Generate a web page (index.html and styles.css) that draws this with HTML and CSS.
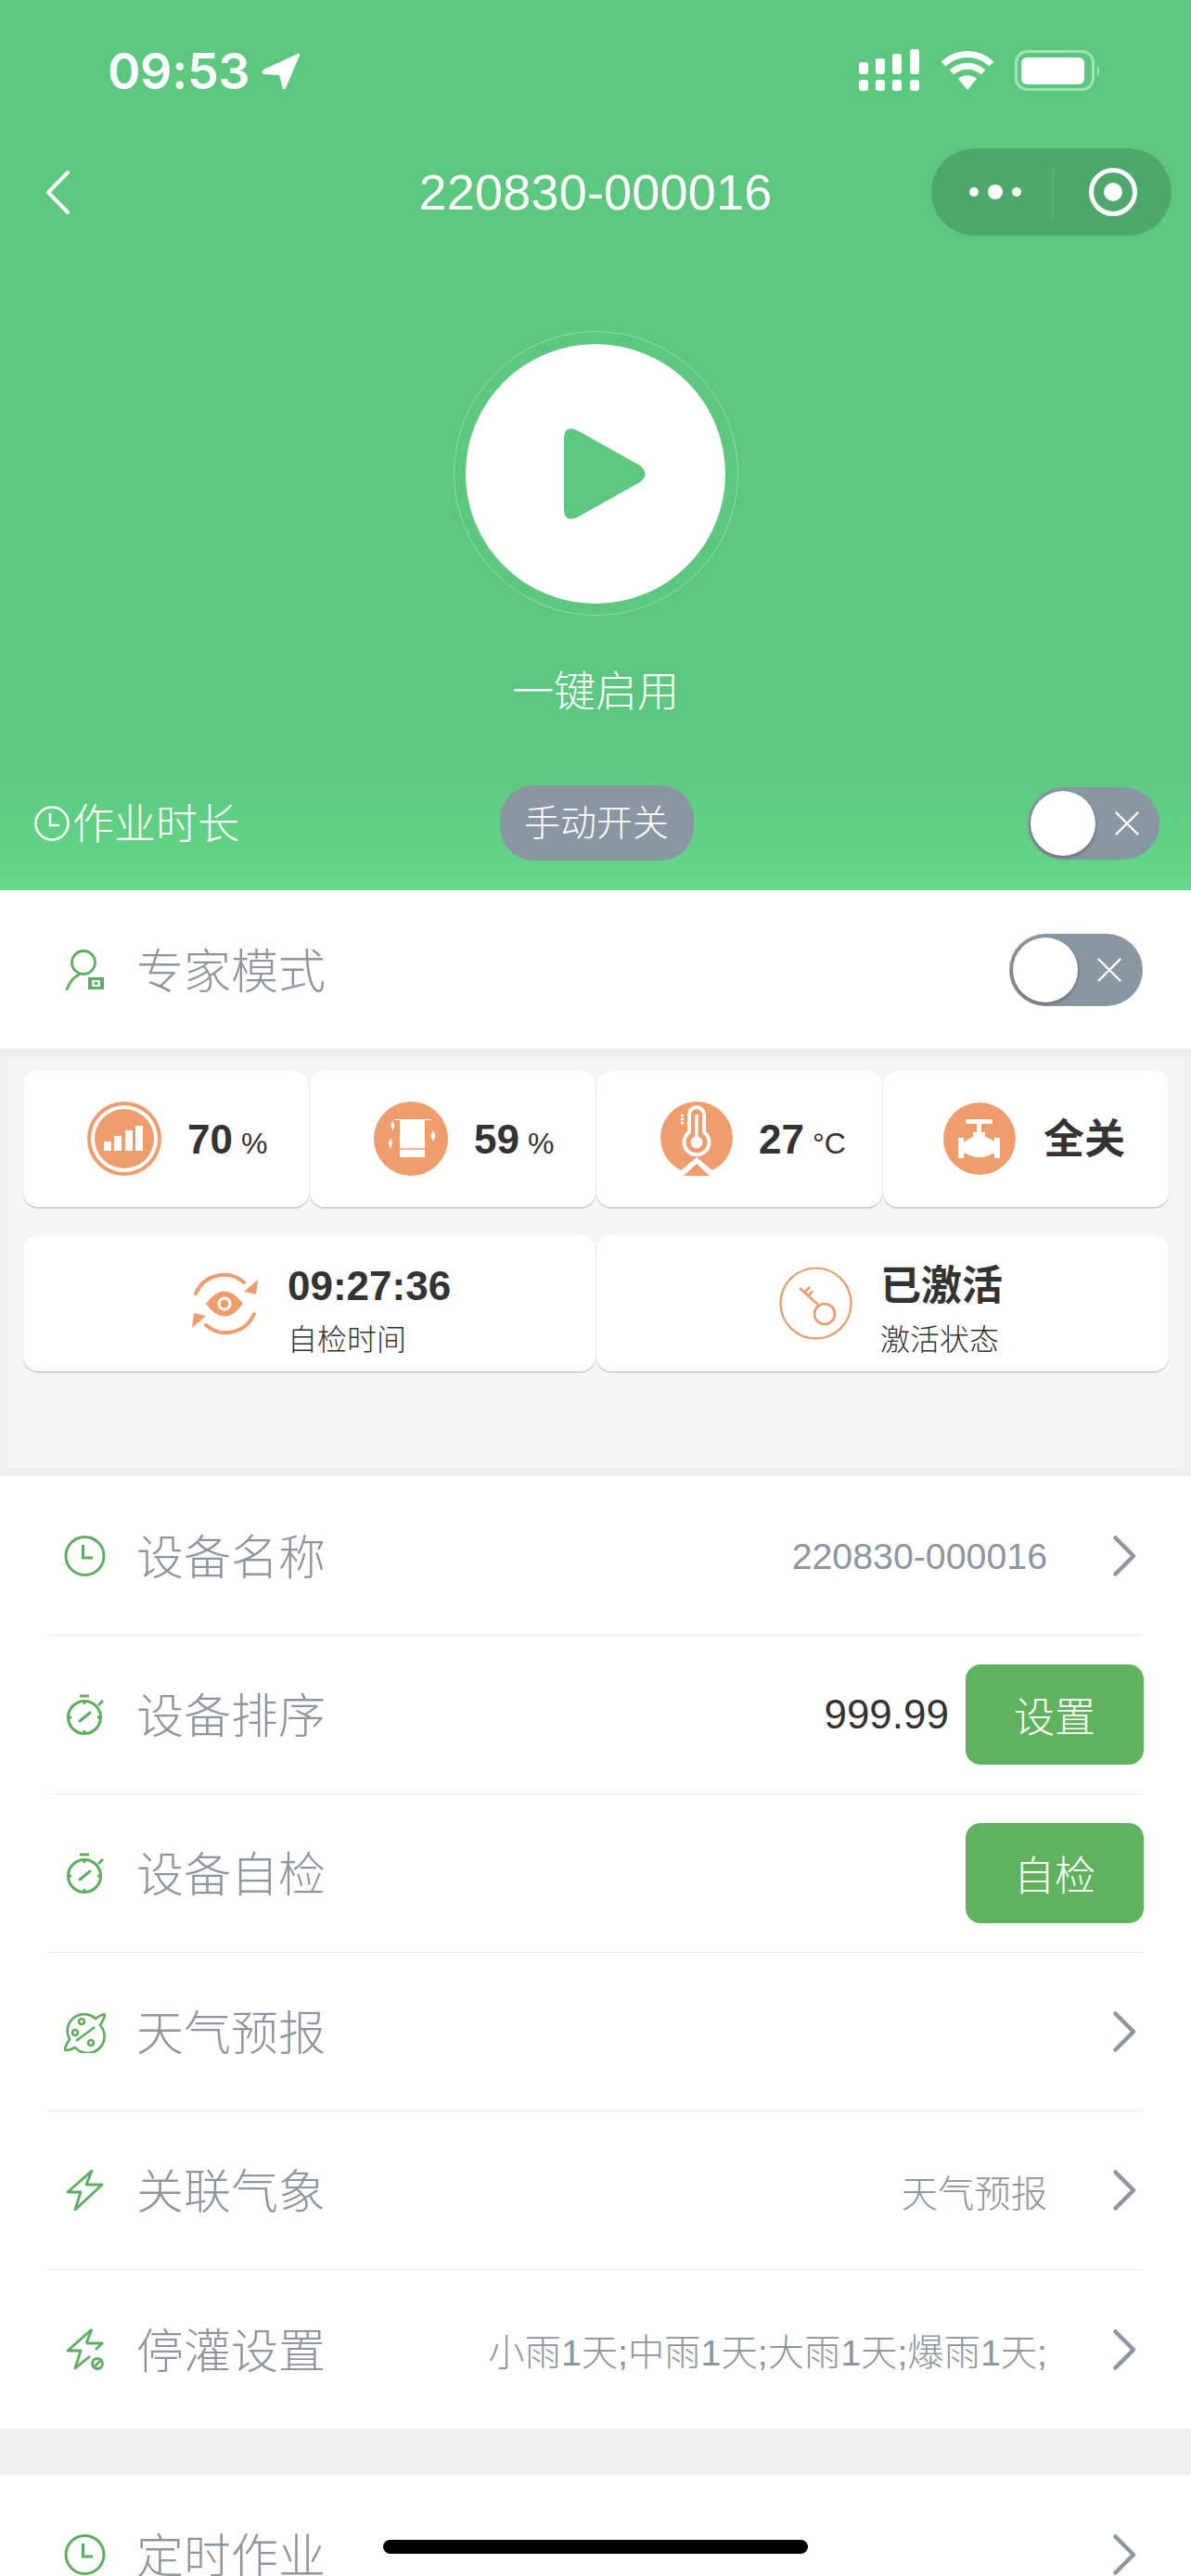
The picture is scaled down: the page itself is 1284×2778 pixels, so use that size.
FILE: index.html
```html
<!DOCTYPE html>
<html lang="zh-CN">
<head>
<meta charset="utf-8">
<title>220830-000016</title>
<link rel="stylesheet" href="styles.css">
</head>
<body>
<div class="page">
  <header class="hero">
    <div class="status">
      <div class="status-left">
        <span class="time">09:53</span>
        <svg class="loc" width="41" height="40" viewBox="0 0 41 40"><path d="M39 1 L2 18 Q-1 21 2 23 L19 24 L23 39 Q24 40 26 38 L41 3 Q41 0 39 1Z" fill="#fff"/></svg>
      </div>
      <div class="status-right">
        <svg width="66" height="45" viewBox="0 0 66 45"><g fill="#fff"><rect x="0" y="14" width="10" height="13" rx="3"/><rect x="18" y="10" width="10" height="17" rx="3"/><rect x="36" y="5" width="10" height="22" rx="3"/><rect x="55" y="0" width="10" height="27" rx="3"/><rect x="0" y="33" width="10" height="12" rx="3"/><rect x="18" y="33" width="10" height="12" rx="3"/><rect x="36" y="33" width="10" height="12" rx="3"/><rect x="55" y="33" width="10" height="12" rx="3"/></g></svg>
        <svg width="58" height="43" viewBox="0 0 58 43"><g fill="none" stroke="#fff" stroke-width="7"><path d="M3 15 C18 1 40 1 55 15"/><path d="M12 24 C22 15 36 15 46 24"/></g><path d="M19 31 C25 26 33 26 39 31 L29 43Z" fill="#fff"/></svg>
        <svg class="batt" width="94" height="44" viewBox="0 0 94 44"><rect x="1.5" y="1.5" width="83" height="41" rx="12" fill="none" stroke="#a5e3b9" stroke-width="3"/><rect x="7" y="8" width="68" height="29" rx="6" fill="#fff"/><path d="M89 16 Q93 22 89 28Z" fill="#a5e3b9"/></svg>
      </div>
    </div>
    <nav class="nav">
      <svg class="back" width="26" height="47" viewBox="0 0 26 47"><path d="M24 2 L3 23.5 L24 45" fill="none" stroke="#fff" stroke-width="4" stroke-linecap="round" stroke-linejoin="round"/></svg>
      <h1 class="title">220830-000016</h1>
      <div class="capsule">
        <svg width="56" height="18" viewBox="0 0 56 18"><g fill="#fff"><circle cx="5" cy="9" r="5"/><circle cx="28" cy="9" r="8"/><circle cx="51" cy="9" r="5"/></g></svg>
        <span class="capsule-line"></span>
        <svg width="54" height="54" viewBox="0 0 54 54"><circle cx="27" cy="27" r="23.5" fill="none" stroke="#fff" stroke-width="5"/><circle cx="27" cy="27" r="10" fill="#fff"/></svg>
      </div>
    </nav>
    <div class="ring">
      <div class="play">
        <svg width="92" height="102" viewBox="0 0 92 102"><path d="M2 13 Q2 -2 16 4 L84 42 Q95 51 84 60 L16 98 Q2 104 2 89Z" fill="#5cc77f"/></svg>
      </div>
    </div>
    <div class="enable">一键启用</div>
    <div class="work">
      <div class="work-left">
        <svg width="40" height="38" viewBox="0 0 40 38"><circle cx="20" cy="19" r="17.5" fill="none" stroke="#fff" stroke-width="2.5"/><path d="M18 8 V21 H28" fill="none" stroke="#fff" stroke-width="2.5"/></svg>
        <span class="work-text">作业时长</span>
      </div>
      <div class="pill">手动开关</div>
      <div class="toggle toggle-end">
        <span class="thumb"></span>
        <svg class="cross" width="26" height="26" viewBox="0 0 26 26"><path d="M1.5 1.5 L24.5 24.5 M24.5 1.5 L1.5 24.5" stroke="#fff" stroke-width="2.4" stroke-linecap="round"/></svg>
      </div>
    </div>
  </header>

  <section class="expert">
    <svg class="row-icon" width="41" height="44" viewBox="0 0 41 44"><circle cx="19" cy="14" r="12.500" fill="none" stroke="#5cae5e" stroke-width="2.800"/><path d="M14 27 C8 30 4 35 1 43" fill="none" stroke="#5cae5e" stroke-width="2.800" stroke-linecap="round"/><rect x="24" y="30" width="17" height="13" fill="#5cae5e"/><rect x="28" y="33" width="9" height="7" fill="#fff"/><rect x="30.500" y="35" width="4" height="3" fill="#5cae5e"/></svg>
    <span class="row-label">专家模式</span>
    <div class="toggle">
      <span class="thumb"></span>
      <svg class="cross" width="26" height="26" viewBox="0 0 26 26"><path d="M1.5 1.5 L24.5 24.5 M24.5 1.5 L1.5 24.5" stroke="#fff" stroke-width="2.4" stroke-linecap="round"/></svg>
    </div>
  </section>

  <section class="panel">
    <div class="panel-inner">
      <div class="stats">
        <div class="card">
          <svg width="80" height="80" viewBox="0 0 80 80"><circle cx="40" cy="40" r="38" fill="none" stroke="#f09d6e" stroke-width="4"/><circle cx="40" cy="40" r="32" fill="#f09d6e"/><g fill="#fff"><rect x="18" y="43" width="8" height="10"/><rect x="29" y="37" width="8" height="16"/><rect x="41" y="31" width="8" height="22"/><rect x="52" y="26" width="8" height="27"/></g></svg>
          <span class="num">70<small>%</small></span>
        </div>
        <div class="card">
          <svg width="80" height="80" viewBox="0 0 80 80"><circle cx="40" cy="40" r="40" fill="#f09d6e"/><rect x="28" y="19" width="27" height="41" fill="#fff"/><path d="M28 51 H55" stroke="#f09d6e" stroke-width="1.500"/><path d="M22 19.500 H62" stroke="#fff" stroke-width="1"/><g fill="#fff"><path d="M20.500 20 L22.500 26 L20.500 32 L18.500 26Z"/><path d="M18 39 L20 45 L18 51 L16 45Z"/><path d="M64 31 L66.500 37 L64 43 L61.500 37Z"/></g></svg>
          <span class="num">59<small>%</small></span>
        </div>
        <div class="card">
          <svg width="78" height="80" viewBox="0 0 78 80"><circle cx="39" cy="39" r="39" fill="#f09d6e"/><path d="M31 14 a8 8 0 0 1 16 0 V33 a13.500 13.500 0 1 1 -16 0Z" fill="none" stroke="#fff" stroke-width="4"/><path d="M39 14 V38" stroke="#fff" stroke-width="3.500"/><circle cx="39" cy="44" r="6.500" fill="#fff"/><path d="M25 15 h-3 M25 19 h-3 M25 23 h-3" stroke="#fff" stroke-width="2.500"/><path d="M20 76 L39 60 L58 76 L46 80 H32Z" fill="#fff"/><path d="M25 80 L39 67 L53 80Z" fill="#f09d6e"/></svg>
          <span class="num">27<small>°C</small></span>
        </div>
        <div class="card card-valve">
          <svg width="78" height="78" viewBox="0 0 78 78"><circle cx="39" cy="39" r="39" fill="#f09d6e"/><g fill="#fff"><rect x="24" y="18" width="29" height="5" rx="2"/><rect x="36" y="23" width="5" height="12"/><rect x="32" y="32" width="13" height="5"/><path d="M23 42 Q39 30 55 42 V54 Q39 64 23 54Z"/><rect x="16" y="38" width="6" height="22"/><rect x="55" y="38" width="6" height="22"/><rect x="20" y="43" width="37" height="12"/></g></svg>
          <span class="cn-num">全关</span>
        </div>
      </div>
      <div class="stats-wide">
        <div class="card-wide">
          <svg width="71" height="70" viewBox="0 0 71 70"><g fill="none" stroke="#f09d6e" stroke-width="4" stroke-linecap="round"><path d="M4 24 A33 33 0 0 1 56 12"/><path d="M67 46 A33 33 0 0 1 15 58"/></g><g fill="#f09d6e"><path d="M71 9 L56 22 L69 25Z"/><path d="M0 61 L15 48 L2 45Z"/><path d="M15 35 Q35 8 55 35 Q35 62 15 35Z"/></g><circle cx="35" cy="35" r="7.500" fill="#fff"/><circle cx="35" cy="35" r="4.500" fill="#f09d6e"/></svg>
          <div class="wide-text">
            <span class="wide-value">09:27:36</span>
            <span class="wide-label">自检时间</span>
          </div>
        </div>
        <div class="card-wide card-wide-key">
          <svg width="79" height="79" viewBox="0 0 79 79"><circle cx="39.500" cy="39.500" r="38" fill="none" stroke="#ec9a6c" stroke-width="2.200"/><g fill="none" stroke="#ec9a6c" stroke-width="2.600"><circle cx="49" cy="51" r="11"/><path d="M42 41 L22 23 M27 28 L33 22 M31 32 L36 26"/></g></svg>
          <div class="wide-text">
            <span class="wide-value wide-cn">已激活</span>
            <span class="wide-label">激活状态</span>
          </div>
        </div>
      </div>
    </div>
  </section>

  <section class="list list-first">
    <div class="row">
      <svg class="row-icon" width="45" height="44" viewBox="0 0 45 44"><circle cx="22.500" cy="22" r="20.500" fill="none" stroke="#5cae5e" stroke-width="3"/><path d="M20.500 10 V24 H31" fill="none" stroke="#5cae5e" stroke-width="3"/></svg>
      <span class="row-label">设备名称</span>
      <span class="row-value">220830-000016</span>
      <svg class="chev" width="25" height="44" viewBox="0 0 25 44"><path d="M2.500 2.500 L22 22 L2.500 41.500" fill="none" stroke="#8b96a0" stroke-width="4.500" stroke-linecap="round" stroke-linejoin="round"/></svg>
    </div>
    <div class="row">
      <svg class="row-icon" width="45" height="44" viewBox="0 0 45 44"><g fill="none" stroke="#5cae5e" stroke-width="3"><circle cx="22" cy="25" r="17.500"/><path d="M17 2 H27 M37 12 L42 7 M22 8 V11 M22 39 V42 M5 25 H8 M36 25 H39"/><path d="M17 29 L28 20" stroke-linecap="round"/></g></svg>
      <span class="row-label">设备排序</span>
      <span class="row-num">999.99</span>
      <button class="btn">设置</button>
    </div>
    <div class="row">
      <svg class="row-icon" width="45" height="44" viewBox="0 0 45 44"><g fill="none" stroke="#5cae5e" stroke-width="3"><circle cx="22" cy="25" r="17.500"/><path d="M17 2 H27 M37 12 L42 7 M22 8 V11 M22 39 V42 M5 25 H8 M36 25 H39"/><path d="M17 29 L28 20" stroke-linecap="round"/></g></svg>
      <span class="row-label">设备自检</span>
      <button class="btn btn-solo">自检</button>
    </div>
    <div class="row">
      <svg class="row-icon" width="45" height="45" viewBox="0 0 45 45"><g fill="none" stroke="#5cae5e" stroke-width="2.600" stroke-linejoin="round"><path d="M6 30 A18 18 0 0 1 34 8 C38 5 44 2 44 4 C44 7 41 11 39 15 A18 18 0 0 1 12 39 C6 42 1 43 1 41 C1 38 4 34 6 30Z"/><path d="M13 32 L33 17"/><circle cx="19" cy="11" r="3"/><circle cx="12" cy="23" r="3"/><circle cx="29" cy="34" r="3"/></g></svg>
      <span class="row-label">天气预报</span>
      <svg class="chev chev-solo" width="25" height="44" viewBox="0 0 25 44"><path d="M2.500 2.500 L22 22 L2.500 41.500" fill="none" stroke="#8b96a0" stroke-width="4.500" stroke-linecap="round" stroke-linejoin="round"/></svg>
    </div>
    <div class="row">
      <svg class="row-icon" width="45" height="44" viewBox="0 0 45 44"><path d="M30 1 L4 24 H18 L12 43 L41 16 H24Z" fill="none" stroke="#5cae5e" stroke-width="2.800" stroke-linejoin="round"/></svg>
      <span class="row-label">关联气象</span>
      <span class="row-value">天气预报</span>
      <svg class="chev" width="25" height="44" viewBox="0 0 25 44"><path d="M2.500 2.500 L22 22 L2.500 41.500" fill="none" stroke="#8b96a0" stroke-width="4.500" stroke-linecap="round" stroke-linejoin="round"/></svg>
    </div>
    <div class="row row-last">
      <svg class="row-icon" width="45" height="45" viewBox="0 0 45 45"><g fill="none" stroke="#5cae5e" stroke-width="2.800" stroke-linejoin="round"><path d="M30 1 L4 24 H18 L12 43 L28 30 M28 16 H41 L34 23 M24 16 H28 M30 1 L24 16"/><circle cx="36" cy="38" r="5.500"/><path d="M33 41 L39 35"/></g></svg>
      <span class="row-label">停灌设置</span>
      <span class="row-value">小雨1天;中雨1天;大雨1天;爆雨1天;</span>
      <svg class="chev" width="25" height="44" viewBox="0 0 25 44"><path d="M2.500 2.500 L22 22 L2.500 41.500" fill="none" stroke="#8b96a0" stroke-width="4.500" stroke-linecap="round" stroke-linejoin="round"/></svg>
    </div>
  </section>

  <section class="list list-second">
    <div class="row row-last">
      <svg class="row-icon" width="45" height="44" viewBox="0 0 45 44"><circle cx="22.500" cy="22" r="20.500" fill="none" stroke="#5cae5e" stroke-width="3"/><path d="M20.500 10 V24 H31" fill="none" stroke="#5cae5e" stroke-width="3"/></svg>
      <span class="row-label">定时作业</span>
      <svg class="chev chev-solo" width="25" height="44" viewBox="0 0 25 44"><path d="M2.500 2.500 L22 22 L2.500 41.500" fill="none" stroke="#8b96a0" stroke-width="4.500" stroke-linecap="round" stroke-linejoin="round"/></svg>
    </div>
  </section>

  <div class="home-bar"></div>
</div>
</body>
</html>
```

FILE: styles.css
```css
* { box-sizing: border-box; }

html, body { margin: 0; padding: 0; }

body {
  font-family: "Liberation Sans", "Noto Sans CJK SC", sans-serif;
  background: #efefef;
}

.page {
  position: relative;
  width: 1284px;
  height: 2778px;
  overflow: hidden;
  background: #efefef;
}

/* Green header */
.hero {
  height: 960px;
  display: flex;
  flex-direction: column;
  color: #fff;
  background: linear-gradient(#5cc77f 0, #5cc77f 820px, #64d888 960px);
}

.status {
  height: 160px;
  padding: 53px 96px 0 116px;
  display: flex;
  justify-content: space-between;
  align-items: flex-start;
}

.status-left { display: flex; align-items: center; gap: 13px; }

.time {
  font-family: Inter, "Liberation Sans", sans-serif;
  font-size: 54px;
  font-weight: 600;
  line-height: 48px;
  letter-spacing: -0.5px;
}

.status-right { display: flex; align-items: center; gap: 22px; }

.nav {
  height: 94px;
  padding: 0 21px;
  display: grid;
  grid-template-columns: 1fr auto 1fr;
  align-items: center;
}

.back { justify-self: start; margin-left: 28px; }

.title {
  margin: 0;
  font-size: 54px;
  font-weight: 400;
  line-height: 60px;
  letter-spacing: 0.2px;
}

.capsule {
  justify-self: end;
  width: 259px;
  height: 94px;
  border-radius: 47px;
  background: #4fa86b;
  display: flex;
  align-items: center;
  padding-left: 41px;
}

.capsule-line {
  width: 1px;
  height: 58px;
  margin: 0 37px 0 34px;
  background: rgba(255, 255, 255, 0.15);
}

.ring {
  width: 307px;
  height: 307px;
  margin: 103px auto 0;
  border: 1px solid rgba(255, 255, 255, 0.32);
  border-radius: 50%;
  display: flex;
  align-items: center;
  justify-content: center;
}

.play {
  width: 280px;
  height: 280px;
  border-radius: 50%;
  background: #fff;
  display: flex;
  align-items: center;
  justify-content: center;
  padding-left: 20px;
}

.enable {
  margin-top: 53px;
  font-size: 45px;
  line-height: 60px;
  text-align: center;
  font-weight: 300;
}

.work {
  margin-top: 70px;
  padding: 0 34px 0 36px;
  display: grid;
  grid-template-columns: 1fr auto 1fr;
  align-items: center;
}

.work-left {
  display: flex;
  align-items: center;
  gap: 2px;
  font-size: 45px;
  font-weight: 300;
}

.work-text { padding-bottom: 5px; }

.pill {
  height: 81px;
  width: 209px;
  border-radius: 36px;
  background: #8a96a1;
  font-size: 39px;
  font-weight: 300;
  line-height: 81px;
  text-align: center;
}

/* Off-state switch */
.toggle {
  width: 144px;
  height: 78px;
  padding-left: 4px;
  border-radius: 39px;
  background: #8a97a1;
  display: flex;
  align-items: center;
  gap: 21px;
}

.toggle-end { justify-self: end; width: 142px; padding-left: 3px; }

.thumb {
  width: 70px;
  height: 70px;
  border-radius: 50%;
  background: #fff;
  box-shadow: 0 2px 4px rgba(0, 0, 0, 0.3);
}

/* Expert mode row */
.expert {
  height: 171px;
  padding: 0 52px 0 71px;
  background: #fff;
  display: flex;
  align-items: center;
}

.row-label {
  padding-bottom: 4px;
  font-size: 51px;
  font-weight: 300;
  color: #8b96a0;
  white-space: nowrap;
}

.expert .row-icon { margin-right: 35px; }
.expert .toggle { margin-left: auto; }

/* Stat cards */
.panel {
  height: 461px;
  padding: 9px 8px;
  background: #efefef;
}

.panel-inner {
  height: 443px;
  padding: 15px 16px 0 17px;
  background: #f5f5f5;
}

.stats {
  display: grid;
  grid-template-columns: repeat(4, 1fr);
  gap: 1px;
}

.card, .card-wide {
  height: 147px;
  border-radius: 16px;
  background: #fff;
  box-shadow: 0 1px 1px #b0b0b0;
  display: flex;
  align-items: center;
}

.card { padding-left: 69px; gap: 28px; padding-bottom: 2px; }
.card-valve { padding-left: 65px; gap: 30px; }

.num {
  padding-top: 2px;
  font-size: 44px;
  font-weight: 700;
  color: #333;
  white-space: nowrap;
}

.num small {
  margin-left: 9px;
  font-size: 32px;
  font-weight: 400;
}

.cn-num {
  padding-bottom: 6px;
  font-size: 44px;
  font-weight: 700;
  color: #333;
}

.stats-wide {
  margin-top: 30px;
  display: grid;
  grid-template-columns: 1fr 1fr;
  gap: 1px;
}

.card-wide { padding-left: 182px; gap: 32px; }
.card-wide-key { padding-left: 197px; gap: 30px; }

.wide-text { display: flex; flex-direction: column; padding-top: 14px; }

.wide-value {
  font-size: 44px;
  font-weight: 700;
  line-height: 56px;
  color: #333;
}

.wide-label {
  margin-top: 8px;
  font-size: 32px;
  font-weight: 300;
  line-height: 44px;
  color: #333;
}

/* Settings list */
.list {
  background: #fff;
  padding: 0 52px 0 51px;
}

.list-first { padding-top: 1px; }
.list-second { margin-top: 50px; }

.row {
  height: 171px;
  padding: 0 7px 0 18px;
  border-bottom: 1px solid #ececec;
  display: flex;
  align-items: center;
}

.row-last { border-bottom: 0; }

.row .row-icon { margin-right: 33px; flex: none; }

.row-value {
  margin-left: auto;
  font-size: 39.300px;
  font-weight: 300;
  color: #8b96a0;
  white-space: nowrap;
}

.row-num {
  margin-left: auto;
  font-size: 44px;
  color: #333;
}

.chev { margin-left: 71px; flex: none; }
.chev-solo { margin-left: auto; }

.btn {
  width: 192px;
  height: 108px;
  margin: 0 -8px 0 18px;
  padding: 0;
  border: 0;
  border-radius: 16px;
  background: #60b35e;
  color: #fff;
  font-family: inherit;
  font-size: 44px;
  font-weight: 300;
}

.btn-solo { margin-left: auto; }

/* iOS home indicator */
.home-bar {
  position: absolute;
  left: 413px;
  top: 2739px;
  width: 458px;
  height: 15px;
  border-radius: 8px;
  background: #000;
}
```
